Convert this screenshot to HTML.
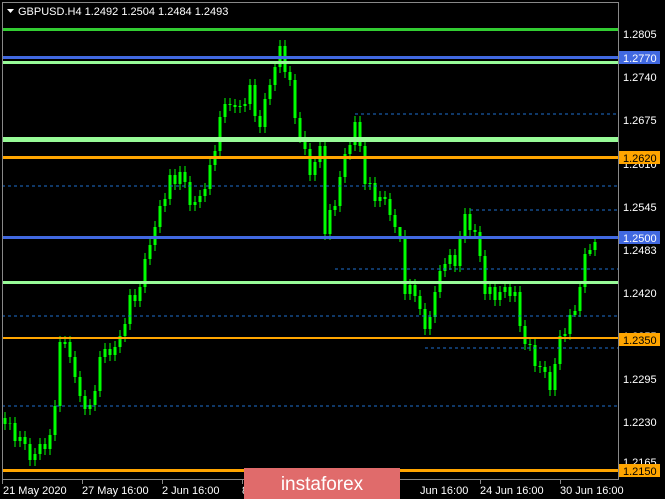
<!DOCTYPE html>
<html><head><meta charset="utf-8"><style>
html,body{margin:0;padding:0;background:#000;width:665px;height:499px;overflow:hidden;font-family:"Liberation Sans",sans-serif}
svg{position:absolute;left:0;top:0}
</style></head><body>
<svg width="665" height="499" xmlns="http://www.w3.org/2000/svg" font-family="Liberation Sans, sans-serif" font-size="11">
<rect x="0" y="0" width="665" height="499" fill="#000"/>
<path fill="none" stroke="#00ff00" stroke-width="1" d="M5 412V430M10 417V430M15 417V447M20 431V447M25 431V450M30 438V466M35 448V466M40 438V460M45 438V455M50 429V455M55 400V441M60 336V412M65 336V348M70 336V363M75 351V383M80 371V402M85 390V415M90 399V415M95 385V411M100 351V397M105 343V363M110 343V361M115 341V361M120 330V353M125 318V342M130 289V330M135 289V307M140 281V307M145 253V293M150 239V265M155 221V251M160 200V233M165 193V212M170 169V205M175 169V190M180 166V190M185 166V188M190 176V211M195 196V211M200 190V208M205 183V202M210 159V195M215 145V171M220 111V157M225 98V123M230 98V111M235 99V113M240 100V113M245 98V112M250 79V110M255 79V122M260 110V133M265 93V133M270 79V105M275 61V91M280 40V73M285 40V78M290 66V86M295 74V124M300 112V143M305 131V155M310 143V181M315 156V181M320 140V168M325 140V240M330 204V240M335 200V216M340 171V212M345 148V183M350 139V160M355 116V151M360 116V152M365 140V190M370 177V190M375 177V207M380 191V207M385 191V205M390 193V221M395 209V233M400 230V242M405 230V300M410 279V300M415 279V302M420 290V315M425 303V335M430 311V335M435 286V323M440 265V298M445 258V277M450 249V270M455 249V272M460 231V272M465 208V243M470 208V236M475 224V238M480 226V262M485 250V300M490 281V300M495 281V306M500 286V306M505 281V298M510 281V302M515 286V302M520 286V332M525 320V350M530 339V351M535 339V372M540 361V373M545 361V378M550 366V396M555 358V396M560 330V370M565 328V342M570 309V340M575 305V317M580 281V317M585 248V293M590 244V256M595 236V256"/>
<path fill="none" stroke="#00ff00" stroke-width="3" d="M5 418V424M10 424V423.5M15 423V441M20 441V437M25 437V444M30 444V460M35 460V454M40 454V444M45 444V449M50 449V435M55 435V406M60 406V342M65 342V344M70 342V357M75 357V377M80 377V396M85 396V409M90 409V405M95 405V391M100 391V357M105 357V349M110 349V355M115 355V347M120 347V336M125 336V324M130 324V295M135 295V301M140 301V287M145 287V259M150 259V245M155 245V227M160 227V206M165 206V199M170 199V175M175 175V184M180 184V172M185 172V182M190 182V205M195 205V202M200 202V196M205 196V189M210 189V165M215 165V151M220 151V117M225 117V104M230 104V105M235 105V107M240 107V106M245 106V104M250 104V85M255 85V116M260 116V127M265 127V99M270 99V85M275 85V67M280 67V46M285 46V72M290 72V80M295 80V118M300 118V137M305 137V149M310 149V175M315 175V162M320 162V146M325 146V234M330 234V210M335 210V206M340 206V177M345 177V154M350 154V145M355 145V122M360 122V146M365 146V184M370 184V183M375 183V201M380 201V197M385 197V199M390 199V215M395 215V227M400 227V236M405 236V294M410 294V285M415 285V296M420 296V309M425 309V329M430 329V317M435 317V292M440 292V271M445 271V264M450 264V255M455 255V266M460 266V237M465 237V214M470 214V230M475 230V232M480 232V256M485 256V294M490 294V287M495 287V300M500 300V292M505 292V287M510 287V296M515 296V292M520 292V326M525 326V344M530 344V345M535 345V366M540 366V367M545 367V372M550 372V390M555 390V364M560 364V336M565 336V334M570 334V315M575 315V311M580 311V287M585 287V254M590 254V250M595 250V242"/>
<g stroke="#1e6fd0" stroke-width="1" stroke-dasharray="3,3">
<line x1="355" y1="114" x2="618" y2="114"/>
<line x1="2" y1="186" x2="618" y2="186"/>
<line x1="470" y1="210" x2="618" y2="210"/>
<line x1="335" y1="269" x2="618" y2="269"/>
<line x1="2" y1="316" x2="618" y2="316"/>
<line x1="425" y1="348" x2="618" y2="348"/>
<line x1="2" y1="406" x2="618" y2="406"/>
</g>
<rect x="2" y="28" width="616" height="3" fill="#32cd32"/>
<rect x="2" y="56" width="616" height="3" fill="#4169e1"/>
<rect x="2" y="61" width="616" height="3" fill="#98fb98"/>
<rect x="2" y="137" width="616" height="5" fill="#98fb98"/>
<rect x="2" y="156" width="616" height="3" fill="#ffa500"/>
<rect x="2" y="236" width="616" height="3" fill="#4169e1"/>
<rect x="2" y="281" width="616" height="3" fill="#98fb98"/>
<rect x="2" y="337" width="616" height="2" fill="#ffa500"/>
<rect x="2" y="469" width="616" height="3" fill="#ffa500"/>
<line x1="2.5" y1="2" x2="2.5" y2="479" stroke="#888"/>
<line x1="2" y1="2.5" x2="618" y2="2.5" stroke="#888"/>
<line x1="618.5" y1="2" x2="618.5" y2="480" stroke="#888"/>
<line x1="2" y1="479.5" x2="618" y2="479.5" stroke="#888"/>
<path d="M7 9 L14 9 L10.5 13 Z" fill="#fff"/>
<text x="18" y="15" fill="#fff">GBPUSD.H4  1.2492 1.2504 1.2484 1.2493</text>
<g fill="#fff">
<text x="623" y="38">1.2805</text>
<text x="623" y="81">1.2740</text>
<text x="623" y="124">1.2675</text>
<text x="623" y="168">1.2610</text>
<text x="623" y="211">1.2545</text>
<text x="623" y="254">1.2483</text>
<text x="623" y="297">1.2420</text>
<text x="623" y="340">1.2355</text>
<text x="623" y="383">1.2295</text>
<text x="623" y="426">1.2230</text>
<text x="623" y="466">1.2165</text>
</g>
<rect x="619" y="51" width="41" height="13" fill="#4169e1"/><text x="623" y="62" fill="#fff">1.2770</text>
<rect x="619" y="151" width="41" height="13" fill="#ffa500"/><text x="623" y="162" fill="#000">1.2620</text>
<rect x="619" y="231" width="41" height="13" fill="#4169e1"/><text x="623" y="242" fill="#fff">1.2500</text>
<rect x="619" y="333" width="41" height="13" fill="#ffa500"/><text x="623" y="344" fill="#000">1.2350</text>
<rect x="619" y="464" width="41" height="13" fill="#ffa500"/><text x="623" y="475" fill="#000">1.2150</text>
<g fill="#fff">
<text x="3" y="494">21 May 2020</text>
<text x="82" y="494">27 May 16:00</text>
<text x="162" y="494">2 Jun 16:00</text>
<text x="242" y="494">8 Jun</text>
<text x="420" y="494">Jun 16:00</text>
<text x="480" y="494">24 Jun 16:00</text>
<text x="560" y="494">30 Jun 16:00</text>
</g>
<g stroke="#888"><line x1="2.5" y1="480" x2="2.5" y2="484"/><line x1="82.5" y1="480" x2="82.5" y2="484"/><line x1="162.5" y1="480" x2="162.5" y2="484"/><line x1="242.5" y1="480" x2="242.5" y2="484"/><line x1="480.5" y1="480" x2="480.5" y2="484"/><line x1="560.5" y1="480" x2="560.5" y2="484"/></g>
<rect x="244" y="468" width="156" height="31" fill="#e06b6b"/>
<text x="322" y="490" fill="#fff" font-size="19" text-anchor="middle">instaforex</text>
</svg>
</body></html>
